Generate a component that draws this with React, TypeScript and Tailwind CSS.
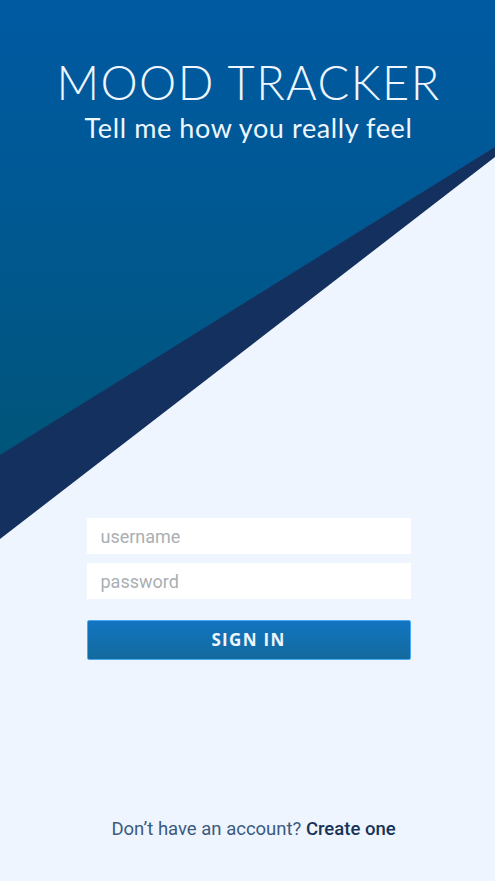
import React from "react";

function Backdrop() {
  return (
    <svg
      className="absolute inset-0 h-full w-full"
      viewBox="0 0 495 881"
      preserveAspectRatio="none"
      aria-hidden="true"
    >
      <defs>
        <linearGradient id="top" x1="0" y1="0" x2="0" y2="1">
          <stop offset="0" stopColor="#005aa2" />
          <stop offset="0.45" stopColor="#005893" />
          <stop offset="1" stopColor="#00557a" />
        </linearGradient>
      </defs>
      <polygon points="0,0 495,0 495,157 0,539" fill="#14305e" />
      <polygon points="0,0 495,0 495,147 0,455" fill="url(#top)" />
    </svg>
  );
}

export default function App() {
  return (
    <div className="relative min-h-[881px] w-full overflow-hidden bg-[#eef5ff] font-['Roboto',sans-serif]">
      <Backdrop />

      <div className="relative flex min-h-[881px] flex-col items-center">
        {/* Header */}
        <div className="mt-[59px] ml-[2px] flex flex-col items-center text-[#eef6ff]">
          <h1 className="font-['Lato',sans-serif] text-[47px] font-light leading-none tracking-[1.4px]">
            MOOD TRACKER
          </h1>
          <p className="mt-[8px] font-['Lato',sans-serif] text-[27px] font-normal leading-none tracking-[0.6px]">
            Tell me how you really feel
          </p>
        </div>

        {/* Form */}
        <form className="mt-[377px] ml-[2px] flex w-[324px] flex-col">
          <input
            type="text"
            placeholder="username"
            className="h-[36px] w-full bg-white px-[14px] text-[18px] text-[#333] outline-none placeholder:text-[#a9afb3]"
          />
          <input
            type="password"
            placeholder="password"
            className="mt-[9px] h-[36px] w-full bg-white px-[14px] text-[18px] text-[#333] outline-none placeholder:text-[#a9afb3]"
          />
          <button
            type="button"
            className="mt-[21px] h-[40px] w-full rounded-[2px] border border-[#4aa9f2] bg-gradient-to-b from-[#1275c2] to-[#136a9c] font-['Open_Sans',sans-serif] text-[17px] font-bold tracking-[1.3px] text-[#eef6ff]"
          >
            SIGN IN
          </button>
        </form>

        {/* Footer */}
        <p className="mt-auto mb-[37px] ml-[12px] text-[18.5px] text-[#3a5a80]">
          Don’t have an account?{" "}
          <a href="#" className="font-medium text-[#173358]">
            Create one
          </a>
        </p>
      </div>
    </div>
  );
}
